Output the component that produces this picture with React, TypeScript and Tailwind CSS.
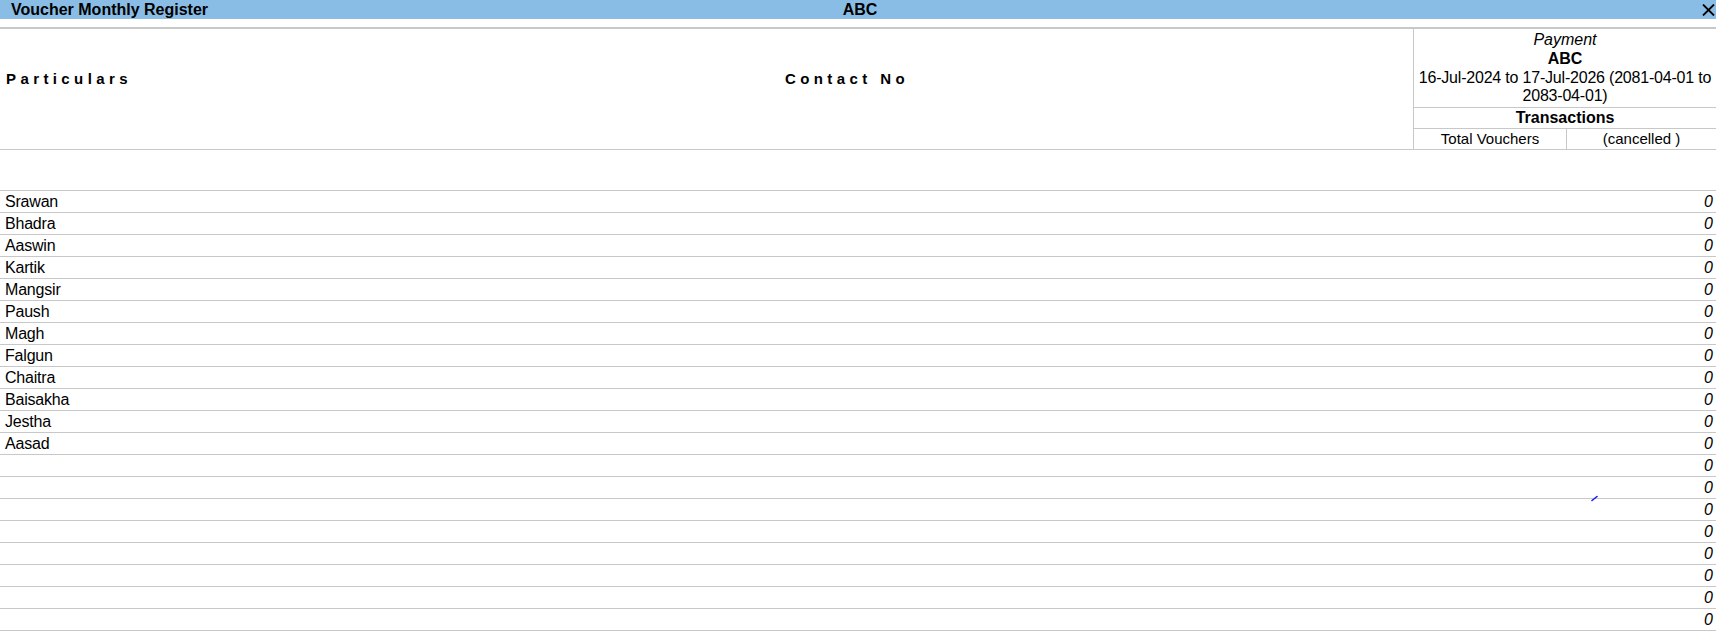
import React from "react";

const months = [
  "Srawan",
  "Bhadra",
  "Aaswin",
  "Kartik",
  "Mangsir",
  "Paush",
  "Magh",
  "Falgun",
  "Chaitra",
  "Baisakha",
  "Jestha",
  "Aasad",
  "",
  "",
  "",
  "",
  "",
  "",
  "",
  "",
];

export default function App() {
  return (
    <div
      className="relative w-[1716px] h-[634px] overflow-hidden bg-white text-black"
      style={{ fontFamily: '"Liberation Sans", Arial, sans-serif' }}
    >
      {/* Title bar */}
      <div className="flex h-[19px] items-center bg-[#89bde6] text-[16px] leading-[19px] font-bold">
        <div className="flex-1 pl-[11px]">Voucher Monthly Register</div>
        <div className="pr-[6px]">ABC</div>
        <div className="flex flex-1 justify-end pr-[1px]">
          <svg width="13" height="12" viewBox="0 0 13 12" className="block">
            <path d="M1 0.5 L12 11.5 M12 0.5 L1 11.5" stroke="#000" strokeWidth="1.8" fill="none" />
          </svg>
        </div>
      </div>
      <div className="h-[10px] border-b-2 border-[#c8c8c8]" />

      {/* Header */}
      <div className="flex h-[121px] border-b border-[#c8c8c8]">
        <div className="grid h-[99px] flex-1 grid-cols-[277px_1fr] items-center text-[15px] leading-[18px] font-bold">
          <div className="pl-[6px] tracking-[4.4px]">Particulars</div>
          <div className="pl-[4px] text-center tracking-[4.4px]">Contact No</div>
        </div>
        <div className="flex w-[303px] flex-col border-l border-[#c8c8c8] text-center text-[16px]">
          <div className="h-[79px] border-b border-[#c8c8c8] pt-[1px] whitespace-nowrap">
            <div className="leading-[19px] italic">Payment</div>
            <div className="leading-[20px] font-bold">ABC</div>
            <div className="leading-[18px] tracking-[-0.2px]">
              16-Jul-2024 to 17-Jul-2026 (2081-04-01 to
              <br />
              2083-04-01)
            </div>
          </div>
          <div className="h-[21px] border-b border-[#c8c8c8] leading-[20px] font-bold">Transactions</div>
          <div className="grid h-[20px] grid-cols-[152px_1fr] text-[15px] leading-[20px]">
            <div>Total Vouchers</div>
            <div className="border-l border-[#c8c8c8]">(cancelled )</div>
          </div>
        </div>
      </div>

      {/* Empty row */}
      <div className="h-[41px] border-b border-[#c8c8c8]" />

      {/* Rows */}
      {months.map((m, i) => (
        <div
          key={i}
          className="flex h-[22px] items-start justify-between border-b border-[#c8c8c8] text-[16px] leading-[21px]"
        >
          <div className="pl-[5px] tracking-[-0.2px]">{m}</div>
          <div className="pr-[3px] italic">0</div>
        </div>
      ))}

      {/* small blue mark */}
      <svg
        width="8"
        height="7"
        viewBox="0 0 8 7"
        className="absolute left-[1591px] top-[495px]"
      >
        <path d="M1 5.5 L6 1.5" stroke="#1a1aff" strokeWidth="1.6" strokeLinecap="round" />
      </svg>
    </div>
  );
}
